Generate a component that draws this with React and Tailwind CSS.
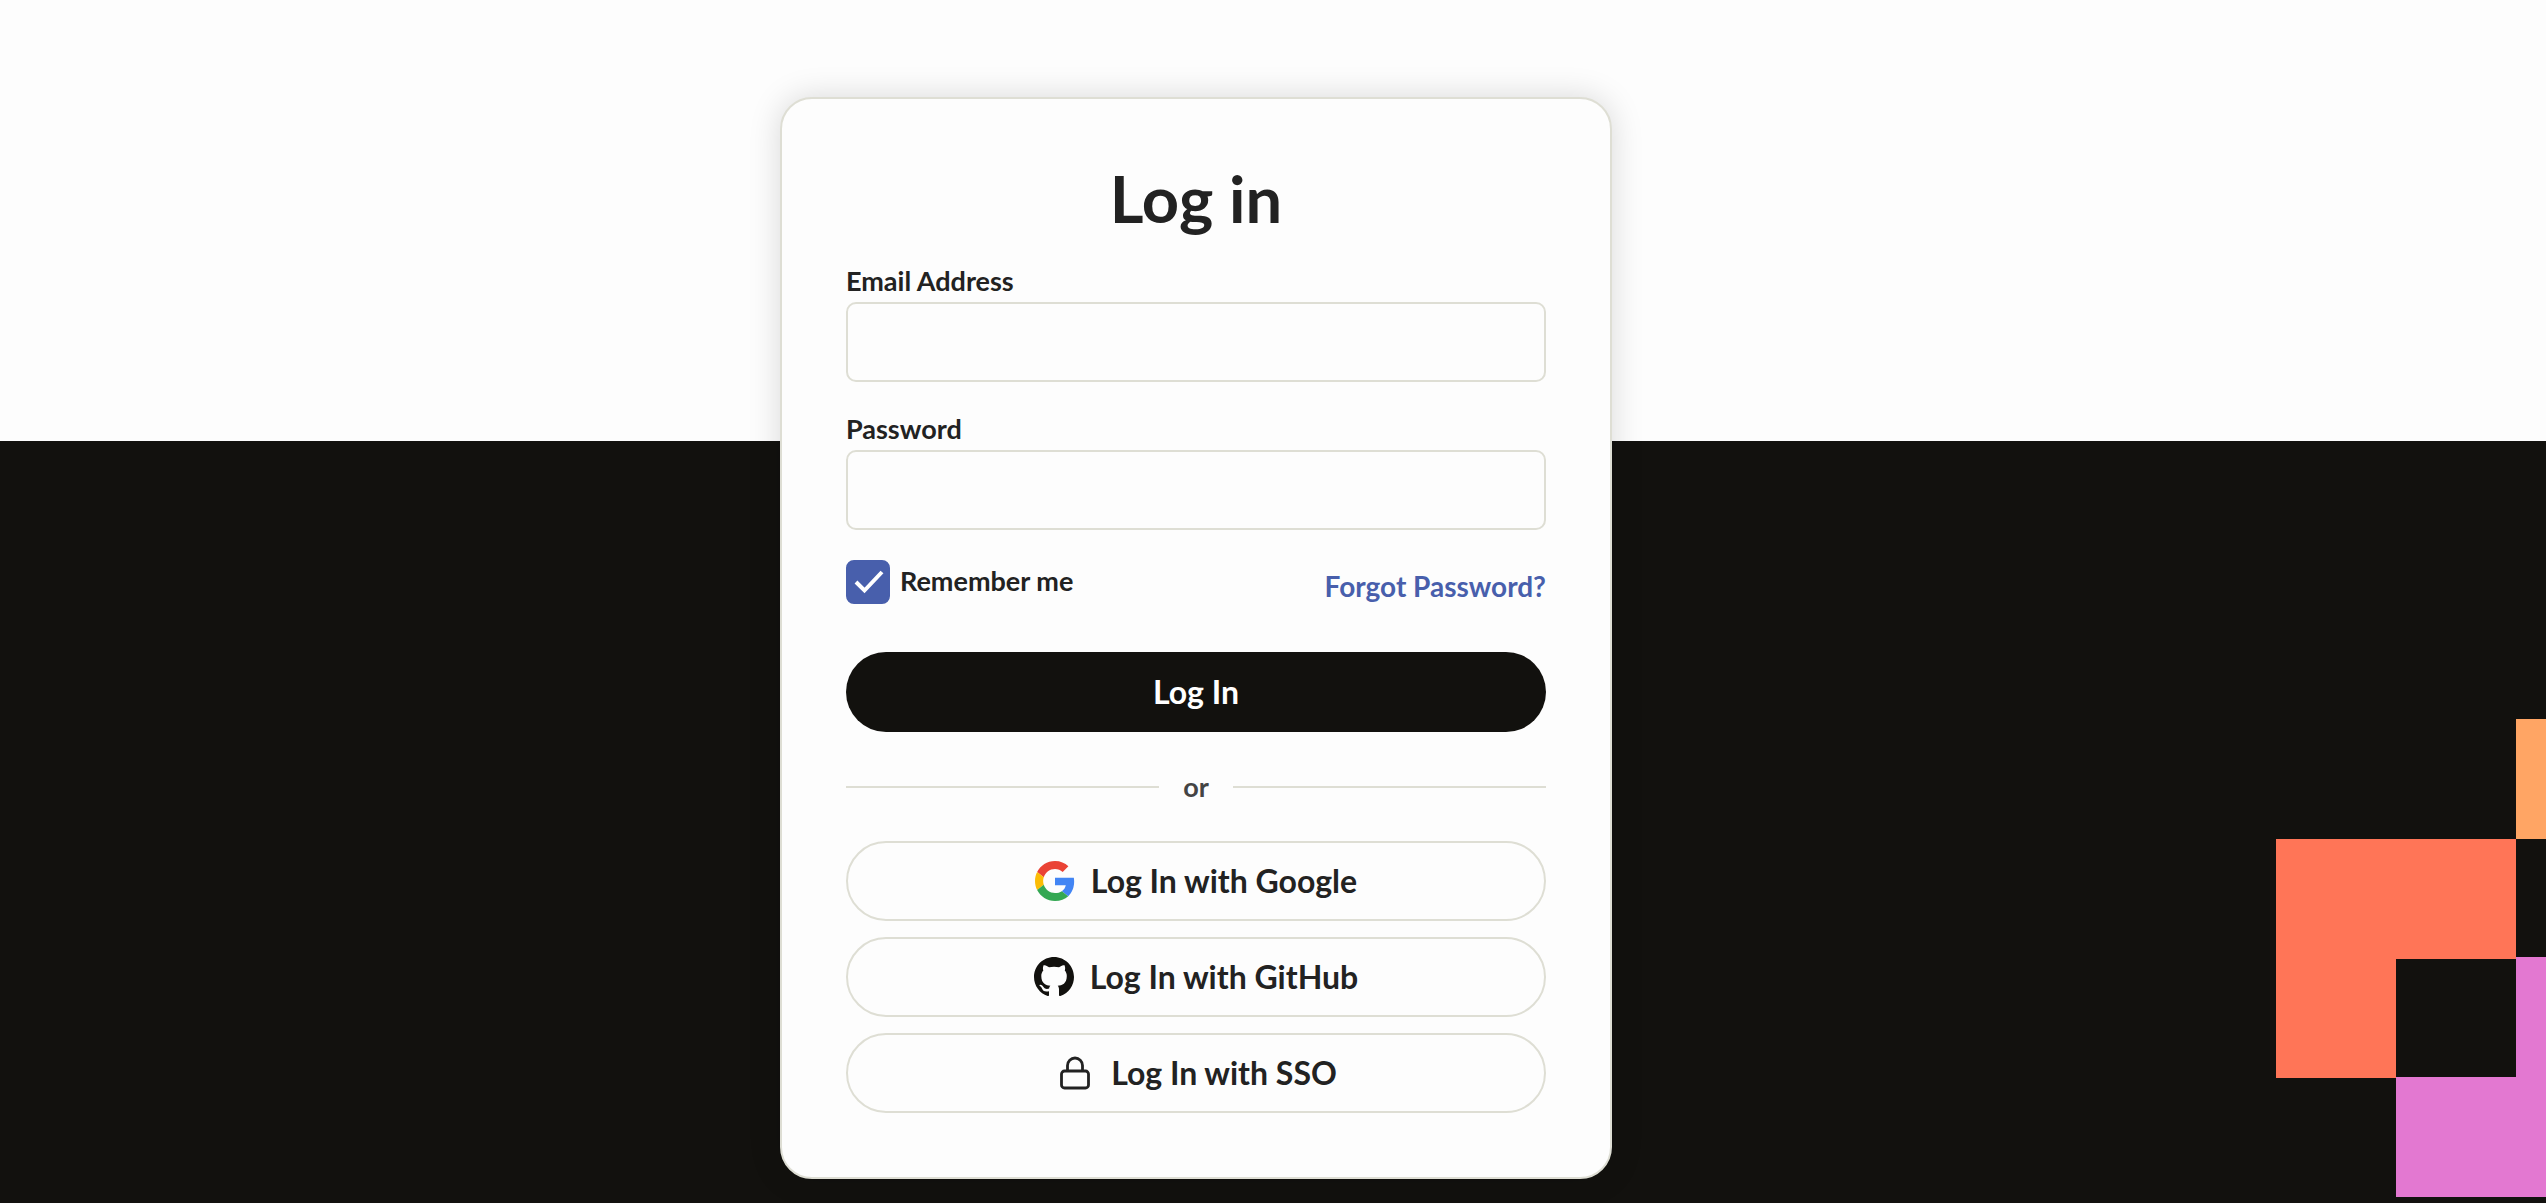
import { useState } from "react";

const inputClass =
  "block w-full h-20 px-5 text-[27px] bg-[#fdfdfd] border-2 border-[#deded4] rounded-[10px] outline-none focus:border-[#485fac]";

const providerClass =
  "flex items-center justify-center gap-4 w-full h-20 border-2 border-[#deded4] rounded-full text-[32px] leading-10 font-bold cursor-pointer hover:bg-[#f6f6f2] transition-colors";

function GoogleIcon() {
  return (
    <svg className="size-10" viewBox="0 0 48 48" aria-hidden="true">
      <path fill="#ea4335" d="M24 9.5c3.54 0 6.71 1.22 9.21 3.6l6.85-6.85C35.9 2.38 30.47 0 24 0 14.62 0 6.51 5.38 2.56 13.22l7.98 6.19C12.43 13.72 17.74 9.5 24 9.5z" />
      <path fill="#4285f4" d="M46.98 24.55c0-1.57-.15-3.09-.38-4.55H24v9.02h12.94c-.58 2.96-2.26 5.48-4.78 7.18l7.73 6c4.51-4.18 7.09-10.36 7.09-17.65z" />
      <path fill="#fbbc05" d="M10.53 28.59c-.48-1.45-.76-2.99-.76-4.59s.27-3.14.76-4.59l-7.98-6.19C.92 16.46 0 20.12 0 24c0 3.88.92 7.54 2.56 10.78l7.97-6.19z" />
      <path fill="#34a853" d="M24 48c6.48 0 11.93-2.13 15.89-5.81l-7.73-6c-2.15 1.45-4.92 2.3-8.16 2.3-6.26 0-11.57-4.22-13.47-9.91l-7.98 6.19C6.51 42.62 14.62 48 24 48z" />
    </svg>
  );
}

function GithubIcon() {
  return (
    <svg className="size-10" viewBox="0 0 16 16" fill="#12110e" aria-hidden="true">
      <path d="M8 0C3.58 0 0 3.58 0 8c0 3.54 2.29 6.53 5.47 7.59.4.07.55-.17.55-.38 0-.19-.01-.82-.01-1.49-2.01.37-2.53-.49-2.69-.94-.09-.23-.48-.94-.82-1.13-.28-.15-.68-.52-.01-.53.63-.01 1.08.58 1.23.82.72 1.21 1.87.87 2.33.66.07-.52.28-.87.51-1.07-1.78-.2-3.64-.89-3.64-3.95 0-.87.31-1.59.82-2.15-.08-.2-.36-1.02.08-2.12 0 0 .67-.21 2.2.82.64-.18 1.32-.27 2-.27s1.36.09 2 .27c1.53-1.04 2.2-.82 2.2-.82.44 1.1.16 1.92.08 2.12.51.56.82 1.27.82 2.15 0 3.07-1.87 3.75-3.65 3.95.29.25.54.73.54 1.48 0 1.07-.01 1.93-.01 2.2 0 .21.15.46.55.38A8.01 8.01 0 0 0 16 8c0-4.42-3.58-8-8-8z" />
    </svg>
  );
}

function LockIcon() {
  return (
    <svg className="size-10" viewBox="0 0 40 40" fill="none" stroke="#222" strokeWidth="2.8" aria-hidden="true">
      <rect x="6.5" y="18" width="27" height="17" rx="3" />
      <path d="M12.500 18V12.500a7.500 7.500 0 0 1 15 0V18" />
    </svg>
  );
}

export default function App() {
  const [email, setEmail] = useState("");
  const [password, setPassword] = useState("");
  const [remember, setRemember] = useState(true);

  const handleSubmit = (e) => {
    e.preventDefault();
  };

  return (
    <div className="relative min-h-screen flex flex-col bg-[#fdfdfd] font-[Lato,sans-serif] text-[#222] overflow-hidden">
      {/* dark backdrop behind the lower part of the card */}
      <div className="absolute inset-x-0 top-[441px] bottom-px bg-[#12110e] overflow-hidden">
        <svg className="absolute right-0 bottom-[6px] w-[270px] h-[478px]" viewBox="0 0 270 478" aria-hidden="true">
          <path fill="#ffa564" d="M240 0h30v120h-30z" />
          <path fill="#ff7557" d="M0 120h240v120H120v119H0z" />
          <path fill="#e378d1" d="M240 238h30v240H120V358h120z" />
        </svg>
      </div>

      <main className="relative flex justify-center pt-[97px] pb-6 pr-[154px]">
        <form
          onSubmit={handleSubmit}
          className="w-full max-w-[832px] p-16 bg-[#fdfdfd] border-2 border-[#deded4] rounded-[32px] shadow-[0_0_32px_rgba(0,0,0,0.15)]"
        >
          <h1 className="mb-7 text-center text-[65px] leading-[71px] font-bold">Log in</h1>

          <label htmlFor="email" className="block text-[27px] leading-[38px] pb-0.5 font-bold">
            Email Address
          </label>
          <input
            id="email"
            type="email"
            className={inputClass}
            value={email}
            onChange={(e) => setEmail(e.target.value)}
          />

          <label htmlFor="password" className="block mt-7 text-[27px] leading-[38px] pb-0.5 font-bold">
            Password
          </label>
          <input
            id="password"
            type="password"
            className={inputClass}
            value={password}
            onChange={(e) => setPassword(e.target.value)}
          />

          <div className="flex items-start justify-between mt-[30px]">
            <label className="flex items-start gap-2.5 text-[27px] leading-[42px] font-bold cursor-pointer">
              <span className="grid size-11">
                <input
                  type="checkbox"
                  className="[grid-area:1/1] appearance-none size-11 rounded-lg border-2 border-[#485fac] checked:bg-[#485fac]"
                  checked={remember}
                  onChange={(e) => setRemember(e.target.checked)}
                />
                {remember && (
                  <svg className="[grid-area:1/1] size-11 pointer-events-none" viewBox="0 0 44 44" fill="none" stroke="#fff" strokeWidth="4" aria-hidden="true">
                    <path d="M10 22l8.500 8.500L36 12" />
                  </svg>
                )}
              </span>
              Remember me
            </label>
            <a href="#forgot" className="pt-2 text-[28px] leading-9 font-bold text-[#485fac] hover:underline">
              Forgot Password?
            </a>
          </div>

          <button
            type="submit"
            className="block w-full h-20 mt-12 rounded-full bg-[#12110e] text-white text-[32px] leading-10 font-bold cursor-pointer"
          >
            Log In
          </button>

          <div className="flex items-center gap-6 py-9 text-[27px] leading-[37px] font-bold text-[#444]">
            <span className="flex-1 h-0.5 bg-[#deded4]" />
            or
            <span className="flex-1 h-0.5 bg-[#deded4]" />
          </div>

          <div className="flex flex-col gap-4">
            <button type="button" className={providerClass}>
              <GoogleIcon />
              Log In with Google
            </button>
            <button type="button" className={providerClass}>
              <GithubIcon />
              Log In with GitHub
            </button>
            <button type="button" className={providerClass}>
              <LockIcon />
              Log In with SSO
            </button>
          </div>
        </form>
      </main>
    </div>
  );
}
